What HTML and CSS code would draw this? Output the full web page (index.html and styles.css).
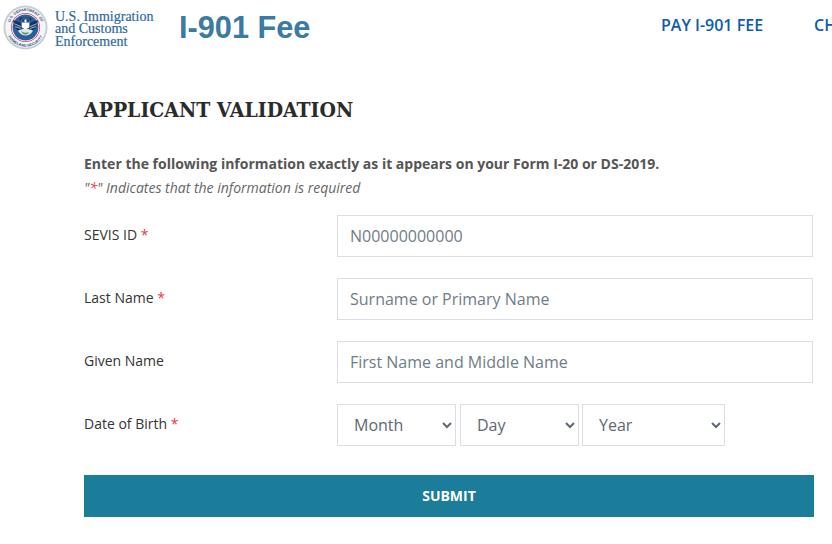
FILE: index.html
```html
<!DOCTYPE html>
<html lang="en">
<head>
    <meta charset="UTF-8">
    <meta name="viewport" content="width=device-width, initial-scale=1.0">
    <title>I-901 Fee</title>
    <link rel="stylesheet" href="styles.css">
</head>
<body>

    <!-- Header -->
    <header class="site-header">
        <div class="agency">
            <svg class="seal" viewBox="0 0 48 48" width="45" height="45" aria-hidden="true">
                <defs>
                    <path id="sealTop" d="M6.5 24a17.5 17.5 0 0 1 35 0"/>
                    <path id="sealBottom" d="M3.5 24a20.500 20.500 0 0 0 41 0"/>
                </defs>
                <circle cx="24" cy="24" r="23.500" fill="#c9ccd0"/>
                <circle cx="24" cy="24" r="21.500" fill="#f4f5f7"/>
                <text class="seal-text"><textPath href="#sealTop" startOffset="50%" text-anchor="middle">U.S. DEPARTMENT OF</textPath></text>
                <text class="seal-text"><textPath href="#sealBottom" startOffset="50%" text-anchor="middle">HOMELAND SECURITY</textPath></text>
                <circle cx="24" cy="24" r="15.500" fill="#c9474f"/>
                <circle cx="24" cy="24" r="14.700" fill="#fff"/>
                <circle cx="24" cy="24" r="13.800" fill="#2a5f9c"/>
                <path d="M10.500 16c3 1 6 1.500 8.500 3l1 9c-3 0-6-2-7.500-5zM37.500 16c-3 1-6 1.500-8.500 3l-1 9c3 0 6-2 7.500-5z" fill="#0f3566"/>
                <path d="M12 20l7 3M36 20l-7 3M13 23l6 2M35 23l-6 2" stroke="#dfe6ef" stroke-width=".8"/>
                <path d="M18 13.500h12v2l-1.500 1.500-4.500 1-4.500-1-1.500-1.500z" fill="#0b2c57"/>
                <path d="M20 14.700h8v9l-4 2.800-4-2.800z" fill="#fff"/>
                <path d="M20 14.700h8v4h-8z" fill="#1a4f8b"/>
                <path d="M23 15.500h2v3h-2z" fill="#fff"/>
                <path d="M16 27.500c3-2.500 13-2.500 16 0-2 3.500-4.500 5-8 5s-6-1.500-8-5z" fill="#dfe8e4"/>
                <path d="M19 27.500c2 2 5 2.500 9 1.500-1.500 2-3 2.500-4.500 2.500-2 0-3.500-1.500-4.500-4z" fill="#5d9a52"/>
            </svg>
            <div class="agency-name">U.S. Immigration<br>and Customs<br>Enforcement</div>
        </div>
        <div class="site-title">I-901 Fee</div>
        <nav class="main-nav">
            <a href="#">PAY I-901 FEE</a>
            <a href="#">CHECK STATUS</a>
        </nav>
    </header>

    <!-- Validation Form -->
    <main class="content">
        <h1>APPLICANT VALIDATION</h1>
        <p class="intro">Enter the following information exactly as it appears on your Form I-20 or DS-2019.</p>
        <p class="required-note">"<span class="req">*</span>" Indicates that the information is required</p>

        <form class="validation-form">
            <div class="form-row">
                <label for="sevis">SEVIS ID <span class="req">*</span></label>
                <input type="text" id="sevis" placeholder="N00000000000">
            </div>
            <div class="form-row">
                <label for="lastName">Last Name <span class="req">*</span></label>
                <input type="text" id="lastName" placeholder="Surname or Primary Name">
            </div>
            <div class="form-row">
                <label for="givenName">Given Name</label>
                <input type="text" id="givenName" placeholder="First Name and Middle Name">
            </div>
            <div class="form-row">
                <label for="month">Date of Birth <span class="req">*</span></label>
                <div class="dob">
                    <select id="month" class="month"><option>Month</option></select>
                    <select class="day"><option>Day</option></select>
                    <select class="year"><option>Year</option></select>
                </div>
            </div>
            <button type="submit">SUBMIT</button>
        </form>
    </main>

</body>
</html>
```

FILE: styles.css
```css
html, body {
    overflow: hidden;
}
body {
    margin: 0;
    background: #fff;
    font-family: "Open Sans", sans-serif;
    color: #444;
}
.site-header {
    display: flex;
    align-items: center;
    height: 54px;
    white-space: nowrap;
}
.agency {
    display: flex;
    flex: none;
    align-items: center;
    gap: 7px;
    width: 179px;
    padding-left: 3px;
    box-sizing: border-box;
}
.seal {
    flex: none;
}
.seal-text {
    font-family: "Liberation Sans", sans-serif;
    font-size: 4px;
    font-weight: bold;
    fill: #2a4f7f;
}
.agency-name {
    margin-top: 5px;
    font-family: "Liberation Serif", serif;
    font-size: 14px;
    line-height: 12.500px;
    color: #2f6a9b;
    -webkit-text-stroke: 0.2px #2f6a9b;
}
.site-title {
    flex: none;
    width: 482px;
    margin-top: 1px;
    font-family: "Liberation Sans", sans-serif;
    font-size: 30.700px;
    font-weight: bold;
    color: #3b7aa3;
}
.main-nav {
    display: flex;
    flex: none;
    gap: 51px;
    margin-top: -4px;
}
.main-nav a {
    font-size: 16px;
    font-weight: 600;
    color: #0b5cad;
    text-decoration: none;
}
.content {
    width: 730px;
    margin-left: 84px;
}
h1 {
    margin: 42px 0 0;
    font-family: "DejaVu Serif Condensed", "DejaVu Serif", serif;
    font-size: 21px;
    line-height: 28px;
    font-weight: bold;
    color: #2b2b2b;
}
.intro {
    margin: 30px 0 0;
    font-size: 14px;
    line-height: 20px;
    font-weight: 700;
    color: #555;
}
.required-note {
    margin: 4px 0 0;
    font-size: 14px;
    line-height: 20px;
    font-style: italic;
    color: #666;
}
.req {
    color: #e8394a;
}
.validation-form {
    margin-top: 17px;
}
.form-row {
    display: grid;
    grid-template-columns: 253px 476px;
    height: 42px;
    margin-bottom: 21px;
}
.form-row label {
    padding-top: 10px;
    font-size: 14px;
    line-height: 20px;
    color: #333;
}
input, select {
    height: 42px;
    box-sizing: border-box;
    border: 1px solid #dcdee3;
    background: #fff;
    font-family: "Open Sans", sans-serif;
    font-size: 16px;
    border-radius: 0;
}
input {
    width: 100%;
    padding: 0 12px;
}
input::placeholder {
    color: #6f7c87;
    opacity: 1;
}
select {
    color: #5c6873;
    padding: 0 0 0 12px;
}
.dob {
    display: flex;
    gap: 4px;
}
.month {
    width: 119px;
}
.day {
    width: 119px;
}
.year {
    width: 143px;
    margin-left: -1px;
}
button {
    display: block;
    width: 100%;
    height: 42px;
    margin-top: 29px;
    padding: 0 0 2px;
    border: none;
    background: #1b7d9a;
    color: #fff;
    font-family: "Open Sans", sans-serif;
    font-size: 14px;
    font-weight: 700;
    cursor: pointer;
}
```
